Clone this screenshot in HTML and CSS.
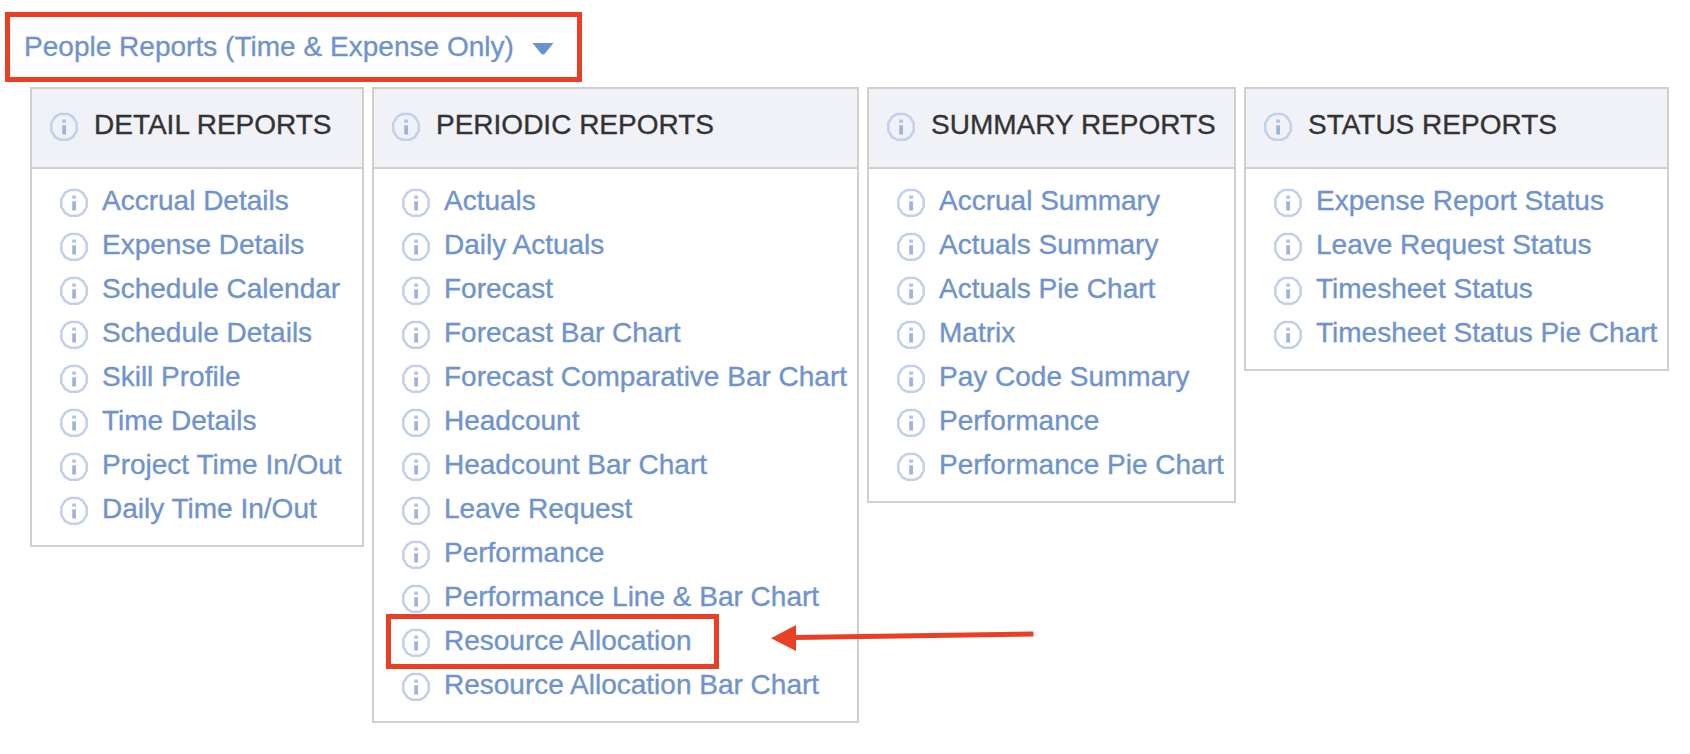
FILE: index.html
```html
<!DOCTYPE html>
<html lang="en">
<head>
<meta charset="utf-8">
<title>People Reports</title>
<link rel="stylesheet" href="styles.css">
</head>
<body>
<svg class="defs" aria-hidden="true">
  <symbol id="info" viewBox="0 0 30 30">
    <path class="ring" d="M11 2H19L24 5L27.7 11V19L24 25L19 27.7H11L6 25L2.3 19V11L6 5Z"/>
    <path class="dot" d="M13.2 7.5H17V10.8H13.2Z"/>
    <path class="stem" d="M13.2 13.3H17V22.5H13.2Z"/>
  </symbol>
</svg>
<main class="page">
  <a class="menu-title"><span class="menu-label">People Reports (Time &amp; Expense Only)</span><svg class="caret" viewBox="0 0 24 14"><path d="M1.5 1H22.5L14 11.5Q12 13.5 10 11.5Z"/></svg></a>
  <div class="columns" id="columns">
    <section class="card detail">
      <h2><svg class="info"><use href="#info"/></svg><span>DETAIL REPORTS</span></h2>
      <ul>
        <li><svg class="info"><use href="#info"/></svg><a>Accrual Details</a></li>
        <li><svg class="info"><use href="#info"/></svg><a>Expense Details</a></li>
        <li><svg class="info"><use href="#info"/></svg><a>Schedule Calendar</a></li>
        <li><svg class="info"><use href="#info"/></svg><a>Schedule Details</a></li>
        <li><svg class="info"><use href="#info"/></svg><a>Skill Profile</a></li>
        <li><svg class="info"><use href="#info"/></svg><a>Time Details</a></li>
        <li><svg class="info"><use href="#info"/></svg><a>Project Time In/Out</a></li>
        <li><svg class="info"><use href="#info"/></svg><a>Daily Time In/Out</a></li>
      </ul>
    </section>
    <section class="card periodic">
      <h2><svg class="info"><use href="#info"/></svg><span>PERIODIC REPORTS</span></h2>
      <ul>
        <li><svg class="info"><use href="#info"/></svg><a>Actuals</a></li>
        <li><svg class="info"><use href="#info"/></svg><a>Daily Actuals</a></li>
        <li><svg class="info"><use href="#info"/></svg><a>Forecast</a></li>
        <li><svg class="info"><use href="#info"/></svg><a>Forecast Bar Chart</a></li>
        <li><svg class="info"><use href="#info"/></svg><a>Forecast Comparative Bar Chart</a></li>
        <li><svg class="info"><use href="#info"/></svg><a>Headcount</a></li>
        <li><svg class="info"><use href="#info"/></svg><a>Headcount Bar Chart</a></li>
        <li><svg class="info"><use href="#info"/></svg><a>Leave Request</a></li>
        <li><svg class="info"><use href="#info"/></svg><a>Performance</a></li>
        <li><svg class="info"><use href="#info"/></svg><a>Performance Line &amp; Bar Chart</a></li>
        <li class="marked"><svg class="info"><use href="#info"/></svg><a>Resource Allocation</a><svg class="arrow" viewBox="0 0 264 28"><path class="shaft" d="M24 13.6L262.5 10"/><path class="head" d="M0 14.3L25 1V27Z"/></svg></li>
        <li><svg class="info"><use href="#info"/></svg><a>Resource Allocation Bar Chart</a></li>
      </ul>
    </section>
    <section class="card summary">
      <h2><svg class="info"><use href="#info"/></svg><span>SUMMARY REPORTS</span></h2>
      <ul>
        <li><svg class="info"><use href="#info"/></svg><a>Accrual Summary</a></li>
        <li><svg class="info"><use href="#info"/></svg><a>Actuals Summary</a></li>
        <li><svg class="info"><use href="#info"/></svg><a>Actuals Pie Chart</a></li>
        <li><svg class="info"><use href="#info"/></svg><a>Matrix</a></li>
        <li><svg class="info"><use href="#info"/></svg><a>Pay Code Summary</a></li>
        <li><svg class="info"><use href="#info"/></svg><a>Performance</a></li>
        <li><svg class="info"><use href="#info"/></svg><a>Performance Pie Chart</a></li>
      </ul>
    </section>
    <section class="card status">
      <h2><svg class="info"><use href="#info"/></svg><span>STATUS REPORTS</span></h2>
      <ul>
        <li><svg class="info"><use href="#info"/></svg><a>Expense Report Status</a></li>
        <li><svg class="info"><use href="#info"/></svg><a>Leave Request Status</a></li>
        <li><svg class="info"><use href="#info"/></svg><a>Timesheet Status</a></li>
        <li><svg class="info"><use href="#info"/></svg><a>Timesheet Status Pie Chart</a></li>
      </ul>
    </section>
  </div>
</main>
</body>
</html>
```
FILE: styles.css
```css
*, *::before { box-sizing: border-box; }
body {
  margin: 0;
  background: #fff;
  color: #333;
  font-family: "Liberation Sans", Arial, sans-serif;
  font-size: 28px;
  overflow: hidden;
}
.defs { display: none; }
.page { padding: 12px 0 0 5px; }
.menu-title {
  display: flex;
  width: 577px;
  height: 70px;
  padding: 13px 0 0 14px;
  border: 5px solid #e94025;
  color: #6f93cc;
  line-height: 34px;
}
.menu-label { width: 490px; white-space: nowrap; letter-spacing: 0.02px; }
.menu-label, .card a, .card h2 span { -webkit-text-stroke: 0.35px currentColor; }
.caret { width: 24px; height: 14px; margin: 12px 0 0 17px; fill: #6a91ce; }
.columns {
  display: flex;
  align-items: flex-start;
  gap: 8px;
  margin: 5px 0 0 25px;
}
.card { border: 2px solid #cfcfcb; background: #fff; flex: none; }
.detail { width: 334px; }
.periodic { width: 487px; }
.summary { width: 369px; }
.status { width: 425px; }
.card h2 {
  display: flex;
  height: 80px;
  margin: 0;
  padding: 19px 0 0 17px;
  border-bottom: 2px solid #cfcfcb;
  background: #f1f2f8;
  font-size: 28px;
  font-weight: 400;
  line-height: 34px;
  white-space: nowrap;
}
.card ul { list-style: none; margin: 0; padding: 15px 0 9px 27px; }
.card li {
  position: relative;
  display: flex;
  height: 44px;
  color: #6f93cc;
  line-height: 34px;
  white-space: nowrap;
}
.info { flex: none; width: 30px; height: 30px; margin: 4px 15px 0 0; }
li .info { margin-right: 13px; }
.ring { fill: none; stroke: #c2d0ea; stroke-width: 2.5; }
.dot { fill: #b4c4e6; }
.stem { fill: #9eb3de; }
/* highlight frame around the chosen report */
.marked::before {
  content: "";
  position: absolute;
  left: -15px;
  top: -10px;
  width: 333px;
  height: 55px;
  border: 5px solid #e94025;
}
.arrow { position: absolute; left: 370px; top: 0; width: 264px; height: 28px; z-index: 2; }
.shaft { stroke: #e94025; stroke-width: 5; }
.head { fill: #e94025; }
```
